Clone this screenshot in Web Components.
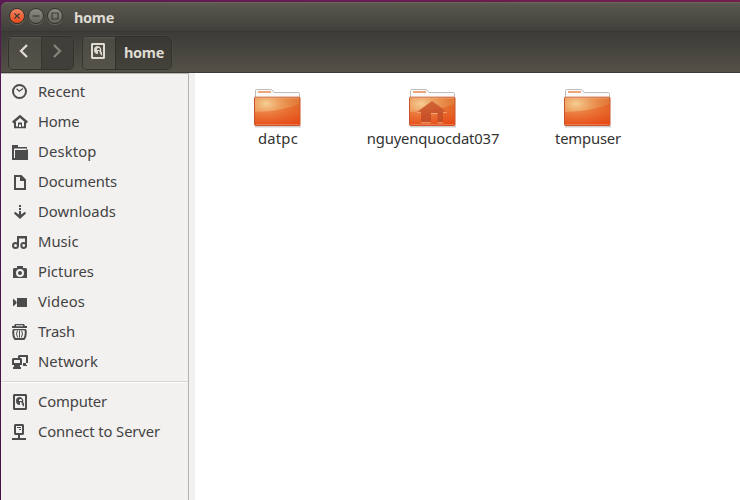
<!DOCTYPE html>
<html lang="en">
<head>
<meta charset="utf-8">
<title>home</title>
<style>
html,body{margin:0;width:740px;height:500px;overflow:hidden}
body{background:linear-gradient(90deg,#5c1a55,#741e4c) 0 0/100% 3px no-repeat,linear-gradient(#571953,#481041);font-family:"Noto Sans","Open Sans",sans-serif}
</style>
</head>
<body>
<file-manager></file-manager>
<script>
const make = (name, html, setup) => {
  const t = document.createElement('template');
  t.innerHTML = html;
  customElements.define(name, class extends HTMLElement {
    constructor() {
      super();
      this.attachShadow({mode: 'open'}).append(t.content.cloneNode(true));
    }
    connectedCallback() { if (setup) setup(this, this.shadowRoot); }
  });
};

// Text tracked out or in so that it fills the width given by "w".
make('fit-text', `<style>:host{display:inline-block;white-space:nowrap;line-height:20px}span{display:inline-block}</style><span><slot></slot></span>`, (el, root) => {
  const span = root.querySelector('span'), n = el.textContent.length;
  const natural = span.getBoundingClientRect().width;
  span.style.letterSpacing = ((+el.getAttribute('w') - natural) / n) + 'px';
});

const disk = `<path fill-rule="evenodd" d="M2 0H14L15 1V15L14 16H2L1 15V1ZM3 2V14H13V2Z"/><path fill-rule="evenodd" d="M8 3A4 4 0 1 0 8 11V8H9L12 12V9L11 8.500A4 4 0 0 0 8 3ZM8 5H9L10 6V7H7V6Z"/><path d="M9.500 10L12 13V11.500L10 9.500Z"/>`;
const icons = {
  recent: `<circle cx="7.5" cy="7.5" r="6.5" fill="none" stroke="currentColor" stroke-width="2"/><path d="M4.6 4.7L7.3 7.3L11 4.5" fill="none" stroke="currentColor" stroke-width="1.2"/>`,
  home: `<path d="M.8 8.5L8 2.3L15.2 8.5" fill="none" stroke="currentColor" stroke-width="2.4"/><path d="M2 8H4V12.5H6V8.5H10V12.5H12V8H14V14.3H2Z"/><path d="M7 10.5H9V13H7Z" fill="#f2f1f0"/>`,
  desktop: `<path d="M0 1H6V3H15V4.5H2V16H0Z"/><path d="M2 5.5H16V16H0V12H2Z"/><path d="M2.5 14V5.5H14" fill="none" stroke="#f2f1f0"/>`,
  documents: `<path fill-rule="evenodd" d="M2 1H9.5L14 5.5V16H2ZM4 3V14H12V7H8V3Z"/>`,
  downloads: `<path d="M7 1H9V3H7ZM7 4H9V6H7ZM7 7H9V10.5L13 7.7L14 9.5L8 15L2 9.5L3 7.7L7 10.5Z"/>`,
  music: `<path d="M5 2H15V12H13V4.5H7V12H5Z"/><circle cx="3.5" cy="11.5" r="2.5" fill="#f2f1f0" stroke="currentColor" stroke-width="2"/><circle cx="11.7" cy="11.5" r="2.4" fill="#f2f1f0" stroke="currentColor" stroke-width="2"/>`,
  pictures: `<path fill-rule="evenodd" d="M5 2H11V4H14L15 5V14H1V5L2 4H5ZM8 5A4 4 0 1 0 8 13A4 4 0 0 0 8 5Z"/><circle cx="8" cy="9" r="2"/>`,
  videos: `<path d="M5 4H15V13H5ZM1 4.5L4.5 7.5V9.5L1 12.5Z"/>`,
  trash: `<path fill-rule="evenodd" d="M3 0H12L13 2H15V4H0V2H2ZM4 1.3V2.2H11V1.3Z"/><path d="M1 5H14V6.3H1Z"/><path d="M1.500 6Q.5 11.500 3 15H12Q14.500 11.500 13.500 6" fill="none" stroke="currentColor" stroke-width="2"/><path d="M5.400 6.500Q3.500 10 5.700 13.500M9.600 6.500Q11.500 10 9.300 13.500M7.500 6.500V13.500" fill="none" stroke="currentColor" stroke-width="1"/>`,
  network: `<path fill-rule="evenodd" d="M7 1H16V9H14V11H15V12H11V9H14V3H8V4H6V2ZM1 4H9L10 5V11H8V13H9V15H1V13H2V11H0V5ZM2 6V9H8V6Z"/>`,
  computer: disk,
  server: `<path fill-rule="evenodd" d="M2 1L3 0H11L12 1V10L11 11H8V14H14V16H0V14H6V11H3L2 10ZM4 2V9H10V2ZM5 3H9V4H5ZM7 5H9V6H7Z"/>`,
  back: `<path d="M11 2L5 8L11 14" fill="none" stroke="currentColor" stroke-width="2.3"/>`,
  next: `<path d="M5 2L11 8L5 14" fill="none" stroke="currentColor" stroke-width="2.3"/>`
};
make('sym-icon', `<style>:host{display:block;width:16px;height:16px;flex:none}svg{display:block}</style><svg width="16" height="16" fill="currentColor"></svg>`, (el, root) => {
  root.querySelector('svg').innerHTML = icons[el.getAttribute('name')];
});

make('window-button', `<style>
:host{display:block;width:16px;height:16px;box-sizing:border-box;border:1px solid #33322e;border-radius:50%;background:linear-gradient(#8d8b83,#65635c);box-shadow:0 1px 0 #69665d;color:#3c3b37}
:host([kind=close]){background:linear-gradient(#f58562,#e4491a)}
svg{display:block}
</style><svg width="14" height="14" fill="none" stroke="currentColor" stroke-width="1.2"><path/></svg>`, (el, root) => {
  root.querySelector('path').setAttribute('d', {
    close: 'M4.5 4.5L9.5 9.5M9.5 4.5L4.5 9.5', min: 'M3.500 7H10.500', max: 'M4 4H10V10H4Z'
  }[el.getAttribute('kind')]);
});

make('title-bar', `<style>
:host{display:flex;align-items:center;height:29px;box-sizing:border-box;padding:0 7.500px 1px;gap:3px;background:linear-gradient(#5f5d53 0,#57554c 4px,#403f3a);border-radius:6px 0 0 0;box-shadow:inset 0 1px #69665b;color:#dfdbd2;font-weight:700;font-size:14.500px}
::slotted(fit-text){margin-top:2px}
</style><window-button kind="close"></window-button><window-button kind="min"></window-button><window-button kind="max"></window-button><slot></slot>`);

make('tool-bar', `<style>
:host{display:flex;height:42px;box-sizing:border-box;padding:4px 7px 3px;gap:8px;background:linear-gradient(#3c3b37,#535047);border-bottom:1px solid #3d3b35;border-top:1px solid #383733}
</style><slot></slot>`);

make('button-group', `<style>
:host{display:flex;box-sizing:border-box;height:34px;border:1px solid #33322d;border-radius:5px;overflow:hidden;box-shadow:0 0 0 1px #55534a55}
</style><slot></slot>`);

make('tool-button', `<style>
:host{display:flex;align-items:center;justify-content:center;box-sizing:border-box;width:32px;padding:0 2px 4px 0;background:linear-gradient(#4b4a43,#55534a);color:#dfdbd2;font-size:14.500px;font-weight:700;box-shadow:inset 0 1px #5a5850}
:host([off]){padding-right:0;background:#403f39;color:#85827a;box-shadow:inset 1px 0 #363530}
:host([current]){width:56px;padding:0 0 2px 2px;background:linear-gradient(#393833,#44423b);box-shadow:inset 1px 0 #302f2b}
</style><slot></slot>`);

make('side-item', `<style>
:host{display:flex;height:30px;box-sizing:border-box;align-items:center;padding-left:11px;gap:10px;color:#4c4c4c;font-size:14.800px}
::slotted(fit-text){color:#434343;margin-top:-2px}
</style><sym-icon></sym-icon><slot></slot>`, (el, root) => {
  const old = root.querySelector('sym-icon'), icon = document.createElement('sym-icon');
  icon.setAttribute('name', el.getAttribute('icon'));
  old.replaceWith(icon);
});

make('side-bar', `<style>
:host{display:block;width:188px;box-sizing:border-box;background:#f2f1f0;border-top:1px solid #b8b5b0;border-right:1px solid #b5b3af;padding-top:3px;color:#444}
</style><slot></slot>`);
make('side-rule', `<style>:host{display:block;height:10px;box-sizing:border-box;padding-top:4px}div{height:1px;background:#d8d6d3;border-bottom:1px solid #fbfbfa}</style><div></div>`);

make('folder-icon', `<style>:host{display:block;width:50px;height:42px}svg{display:block}.house{display:none}:host([house]) .house{display:block}</style>
<svg width="50" height="42"><defs>
<linearGradient id="f" x2="0" y2="1"><stop stop-color="#d9712f"/><stop offset=".5" stop-color="#e3722f"/><stop offset="1" stop-color="#e84e1e"/></linearGradient>
<radialGradient id="g" cx=".25" cy=".22" r=".95"><stop stop-color="#f7d49a" stop-opacity=".95"/><stop offset=".5" stop-color="#f3a868" stop-opacity=".5"/><stop offset="1" stop-color="#f08040" stop-opacity="0"/></radialGradient>
<linearGradient id="h" x2="0" y2="1"><stop stop-color="#cf5c30"/><stop offset="1" stop-color="#c24a24"/></linearGradient></defs>
<path d="M2 39.500H48" stroke="#777" stroke-opacity=".35" stroke-width="2"/>
<path d="M2.500 10V3.500Q2.500 2.500 3.500 2.500H17.500Q19 2.500 20 4L21 5.500H45.500Q46.500 5.500 46.500 6.500V10" fill="#fafafa" stroke="#bdbdbd"/>
<path d="M5 4H18V6H5Z" fill="#eda778"/>
<rect x="1.500" y="10.200" width="45.500" height="28.300" rx="1" fill="url(#f)" stroke="#c9522a"/>
<rect x="2" y="10.500" width="44.500" height="28" fill="url(#g)"/>
<path d="M2.500 11.200H46" stroke="#f4ad7e" stroke-opacity=".6"/>
<path d="M2 25Q30 24 46.500 17V38H2Z" fill="#e43a08" fill-opacity=".3"/>
<path d="M2.500 37.500H46" stroke="#f7a171" stroke-opacity=".5"/>
<g class="house"><path d="M24 14L39 25H35V35.500H29.500V26.500H23V35.500H13V25H9Z" fill="url(#h)" fill-opacity=".92"/><path d="M9 25.300H13M35 25.300H39M23 26.500H29.500M13 35.800H23M29.500 35.800H35" stroke="#f6a57c"/></g></svg>`);

make('file-item', `<style>
:host{display:flex;flex-direction:column;align-items:center;width:155px;color:#333;font-size:14.800px}
::slotted(fit-text){margin-top:-1px}
</style><folder-icon></folder-icon><slot></slot>`, (el, root) => {
  if (el.hasAttribute('house')) root.querySelector('folder-icon').setAttribute('house', '');
});
make('file-grid', `<style>:host{display:flex;align-items:flex-start;flex:1;background:#fff;padding:14px 0 0 5.500px}</style><slot></slot>`);

make('file-manager', `<style>
:host{display:flex;flex-direction:column;height:500px;box-sizing:border-box;padding:2px 0 0 1px}
main{display:flex;flex:1;background:#f2f1f0;gap:6px}
title-bar fit-text{margin-left:8.500px}
</style>
<title-bar><fit-text w="40">home</fit-text></title-bar>
<tool-bar>
<button-group><tool-button><sym-icon name="back"></sym-icon></tool-button><tool-button off><sym-icon name="next"></sym-icon></tool-button></button-group>
<button-group><tool-button><sym-icon name="computer"></sym-icon></tool-button><tool-button current><fit-text w="40">home</fit-text></tool-button></button-group>
</tool-bar>
<main>
<side-bar>
<side-item icon="recent"><fit-text w="47">Recent</fit-text></side-item>
<side-item icon="home"><fit-text w="41.500">Home</fit-text></side-item>
<side-item icon="desktop"><fit-text w="58.500">Desktop</fit-text></side-item>
<side-item icon="documents"><fit-text w="79">Documents</fit-text></side-item>
<side-item icon="downloads"><fit-text w="78">Downloads</fit-text></side-item>
<side-item icon="music"><fit-text w="40.500">Music</fit-text></side-item>
<side-item icon="pictures"><fit-text w="56">Pictures</fit-text></side-item>
<side-item icon="videos"><fit-text w="47">Videos</fit-text></side-item>
<side-item icon="trash"><fit-text w="37">Trash</fit-text></side-item>
<side-item icon="network"><fit-text w="60">Network</fit-text></side-item>
<side-rule></side-rule>
<side-item icon="computer"><fit-text w="69">Computer</fit-text></side-item>
<side-item icon="server"><fit-text w="122">Connect to Server</fit-text></side-item>
</side-bar>
<file-grid>
<file-item><fit-text w="40">datpc</fit-text></file-item>
<file-item house><fit-text w="132.500">nguyenquocdat037</fit-text></file-item>
<file-item><fit-text w="66">tempuser</fit-text></file-item>
</file-grid>
</main>`);
</script>
</body>
</html>
